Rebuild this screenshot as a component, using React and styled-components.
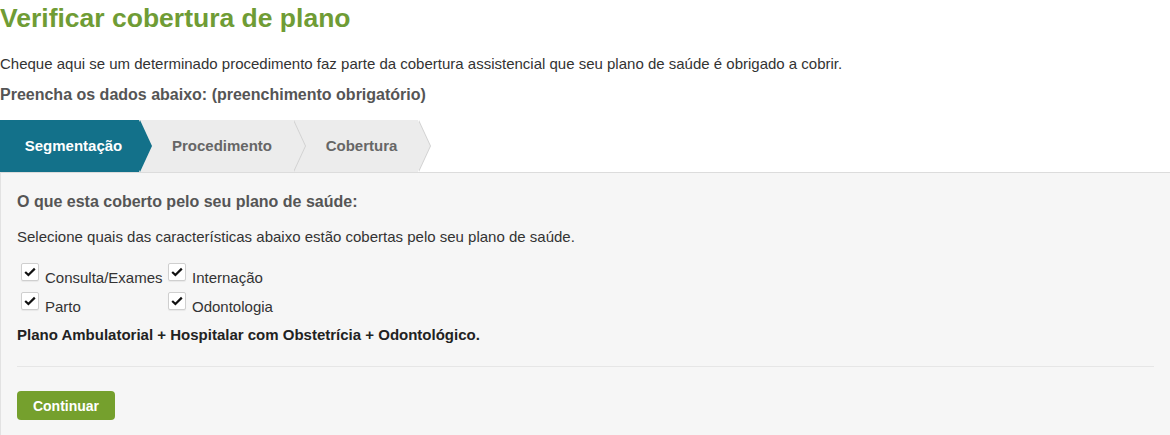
import React, { useState } from "react";
import styled, { createGlobalStyle } from "styled-components";

const GlobalStyle = createGlobalStyle`
  html, body {
    margin: 0;
    padding: 0;
    background: #fff;
    font-family: "Liberation Sans", Arial, sans-serif;
  }
`;

const Page = styled.div`
  width: 1170px;
  height: 435px;
  overflow: hidden;
`;

const Title = styled.h1`
  margin: 0;
  padding-top: 3px;
  font-size: 26.5px;
  line-height: 30px;
  font-weight: bold;
  color: #6f9c35;
`;

const Lead = styled.p`
  margin: 22px 0 0;
  font-size: 15px;
  line-height: 18px;
  color: #333;
`;

const Required = styled.p`
  margin: 13px 0 0;
  font-size: 16px;
  line-height: 18px;
  font-weight: bold;
  color: #555;
`;

const Steps = styled.div`
  display: flex;
  margin-top: 16px;
  height: 52px;
`;

const Step = styled.div`
  position: relative;
  z-index: ${(p) => p.$z};
  width: ${(p) => p.$w}px;
  flex: none;
  display: flex;
  align-items: center;
  justify-content: center;
  padding-left: ${(p) => (p.$first ? 8 : 12)}px;
  padding-bottom: 1px;
  box-sizing: border-box;
  background: ${(p) => (p.$active ? "#13718a" : "#ececec")};
  color: ${(p) => (p.$active ? "#fff" : "#666")};
  font-size: 15px;
  font-weight: bold;

  &::before,
  &::after {
    content: "";
    position: absolute;
    top: 0;
    width: 12px;
    height: 100%;
    clip-path: polygon(0 0, 100% 50%, 0 100%);
  }
  &::before {
    right: -13px;
    background: ${(p) => (p.$active ? "#13718a" : "#d2d2d2")};
  }
  &::after {
    right: -12px;
    background: ${(p) => (p.$active ? "#13718a" : "#ececec")};
  }
`;

const Panel = styled.div`
  border-top: 1px solid #dcdcdc;
  border-left: 1px solid #e2e2e2;
  background: #f6f6f6;
  padding: 0 16px;
  height: 300px;
`;

const Heading = styled.h2`
  margin: 0;
  padding-top: 20px;
  font-size: 16px;
  line-height: 18px;
  font-weight: bold;
  color: #555;
`;

const Hint = styled.p`
  margin: 17px 0 0;
  font-size: 15px;
  line-height: 18px;
  color: #333;
`;

const Options = styled.div`
  display: grid;
  grid-template-columns: 147px auto;
  justify-content: start;
  row-gap: 11px;
  margin-top: 23px;
  padding-left: 4px;
`;

const Option = styled.label`
  display: flex;
  align-items: flex-start;
  gap: 6px;
  font-size: 15px;
  line-height: 18px;
  color: #333;
  cursor: pointer;
`;

const Box = styled.span`
  flex: none;
  width: 18px;
  height: 18px;
  margin-top: -6px;
  box-sizing: border-box;
  border: 1px solid #cfcfcf;
  border-radius: 2px;
  background: #fff;
  box-shadow: 0 1px 1px rgba(0, 0, 0, 0.06);
  display: flex;
  align-items: center;
  justify-content: center;
`;

const Summary = styled.p`
  margin: 10px 0 0;
  font-size: 15px;
  line-height: 18px;
  font-weight: bold;
  color: #222;
`;

const Divider = styled.hr`
  margin: 22px 0 0;
  border: none;
  border-top: 1px solid #e6e6e6;
`;

const Button = styled.button`
  margin-top: 24px;
  width: 98px;
  height: 29px;
  border: none;
  border-radius: 4px;
  background: #75a02d;
  color: #fff;
  font-family: inherit;
  font-size: 14px;
  font-weight: bold;
  cursor: pointer;
`;

const Check = () => (
  <svg width="12" height="10" viewBox="0 0 12 10">
    <path d="M1.2 5 L4.4 8 L10.8 1.6" fill="none" stroke="#111" strokeWidth="2.2" />
  </svg>
);

const steps = [
  { label: "Segmentação", w: 139 },
  { label: "Procedimento", w: 154 },
  { label: "Cobertura", w: 125 },
];

const options = ["Consulta/Exames", "Internação", "Parto", "Odontologia"];

export default function App() {
  const [checked, setChecked] = useState(options.map(() => true));

  return (
    <Page>
      <GlobalStyle />
      <Title>Verificar cobertura de plano</Title>
      <Lead>
        Cheque aqui se um determinado procedimento faz parte da cobertura assistencial que seu plano de saúde é obrigado a cobrir.
      </Lead>
      <Required>Preencha os dados abaixo: (preenchimento obrigatório)</Required>
      <Steps>
        {steps.map((s, i) => (
          <Step key={s.label} $w={s.w} $z={10 - i} $first={i === 0} $active={i === 0}>
            {s.label}
          </Step>
        ))}
      </Steps>
      <Panel>
        <Heading>O que esta coberto pelo seu plano de saúde:</Heading>
        <Hint>Selecione quais das características abaixo estão cobertas pelo seu plano de saúde.</Hint>
        <Options>
          {options.map((o, i) => (
            <Option
              key={o}
              onClick={() => setChecked((c) => c.map((v, j) => (j === i ? !v : v)))}
            >
              <Box>{checked[i] && <Check />}</Box>
              {o}
            </Option>
          ))}
        </Options>
        <Summary>Plano Ambulatorial + Hospitalar com Obstetrícia + Odontológico.</Summary>
        <Divider />
        <Button>Continuar</Button>
      </Panel>
    </Page>
  );
}
